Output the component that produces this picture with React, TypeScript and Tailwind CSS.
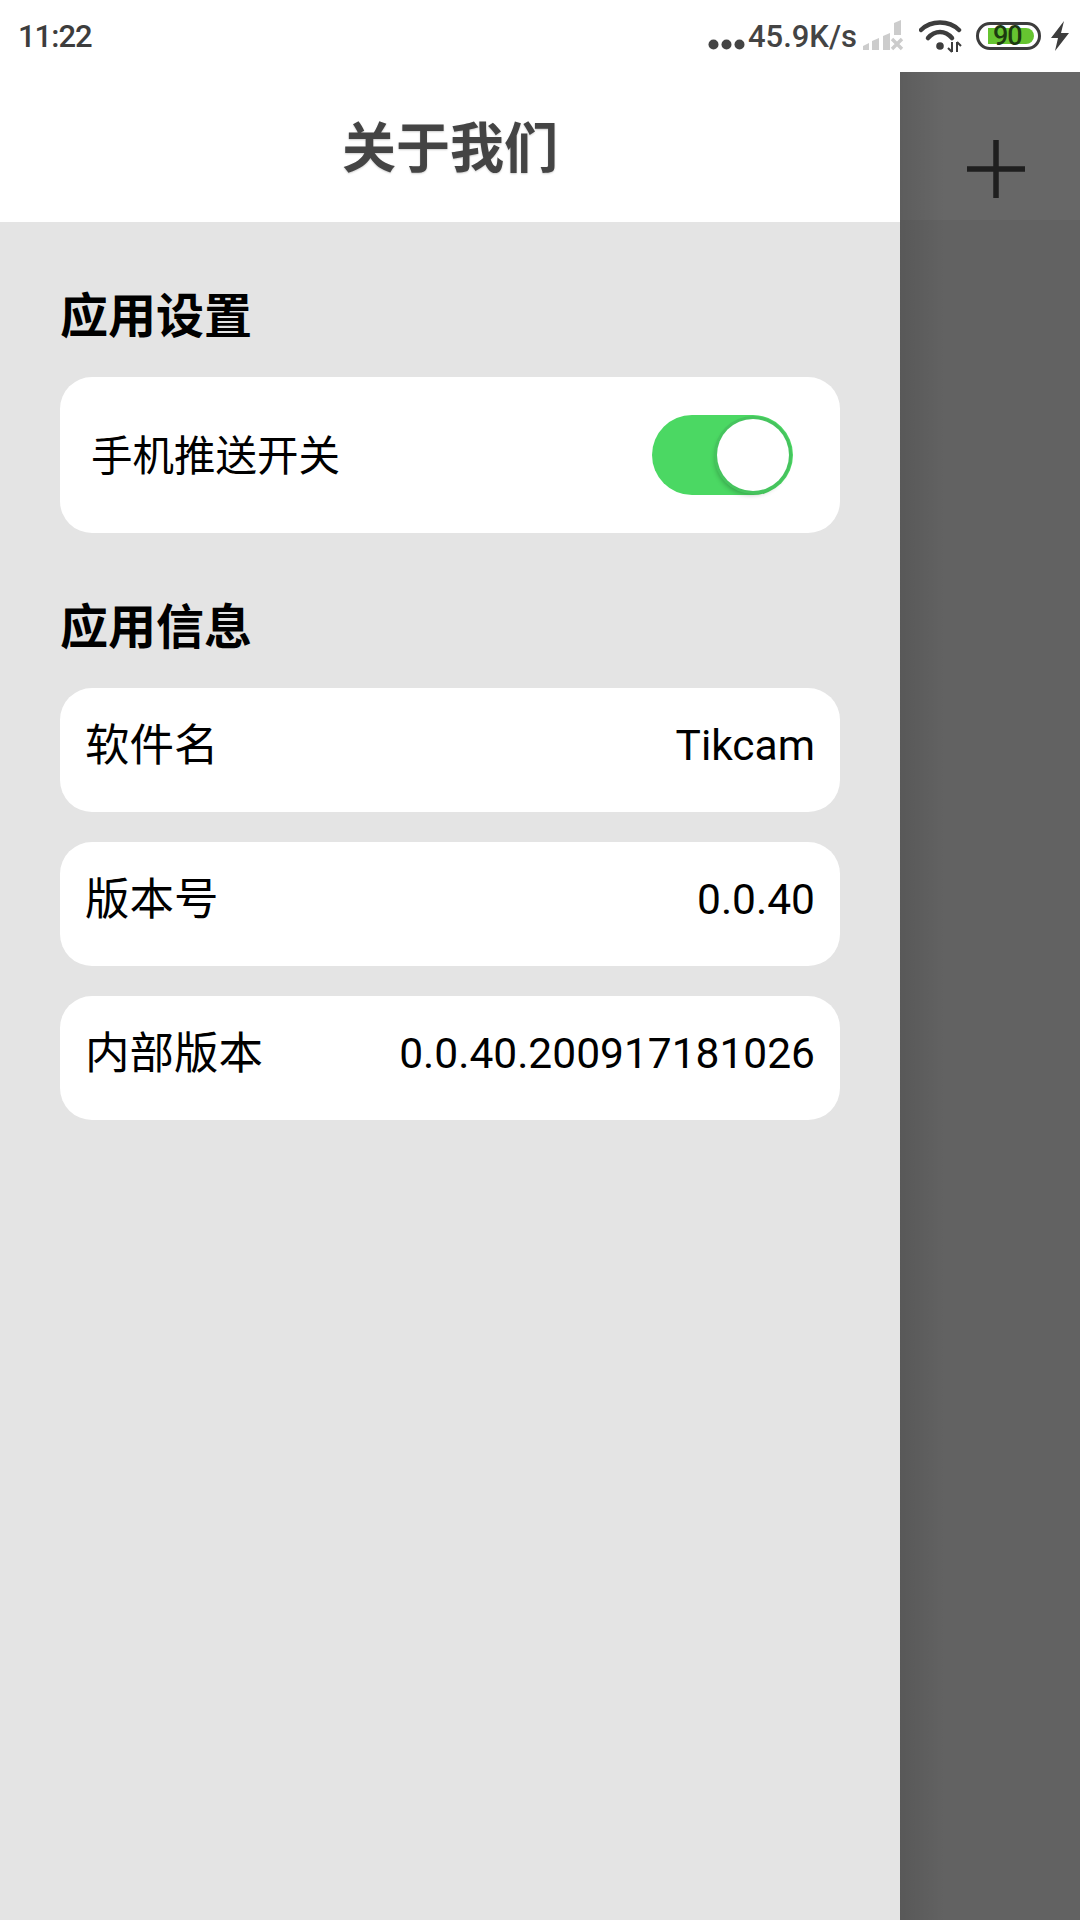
export default function App() {
  const infoRows = [
    { label: "软件名", value: "Tikcam" },
    { label: "版本号", value: "0.0.40" },
    { label: "内部版本", value: "0.0.40.200917181026" },
  ];

  return (
    <div className="w-[1080px] h-[1920px] flex flex-col overflow-hidden bg-white text-black font-['Roboto','Noto_Sans_CJK_SC',sans-serif]">
      {/* status bar */}
      <div className="h-[72px] shrink-0 flex items-center bg-white text-[#3d3d3d]">
        <span className="ml-[18px] text-[31px] font-medium leading-none tracking-[-1px]">11:22</span>
        <div className="ml-auto flex items-center">
          <svg width="37" height="13" viewBox="0 0 37 13" className="mt-[16px]">
            <circle cx="5.5" cy="6.5" r="5" fill="#444" />
            <circle cx="18.5" cy="6.5" r="5" fill="#444" />
            <circle cx="31.5" cy="6.5" r="5" fill="#444" />
          </svg>
          <span className="ml-[3px] text-[31px] font-medium leading-none text-[#444]">45.9K/s</span>
          <svg width="42" height="32" viewBox="0 0 42 32" className="ml-[6px]">
            <path d="M0 30v-4l6-3v7z" fill="#ccc" />
            <path d="M9 30V21l7-3v12z" fill="#ccc" />
            <path d="M20 30V16l7-3v17z" fill="#ccc" />
            <path d="M31 15V3l7-3v15z" fill="#ccc" />
            <path d="M29 19l10 10M39 19l-10 10" stroke="#ccc" strokeWidth="3.4" />
          </svg>
          <svg width="44" height="34" viewBox="0 0 44 34" className="ml-[14px]">
            <path d="M2 11C12 1 30 1 40 11" fill="none" stroke="#3d3d3d" strokeWidth="4.5" strokeLinecap="round" />
            <path d="M9 19C16 11 26 11 33 19" fill="none" stroke="#3d3d3d" strokeWidth="4.5" strokeLinecap="round" />
            <circle cx="21" cy="27" r="3.8" fill="#3d3d3d" />
            <path d="M33 23v10M29 29l4 4M38 33V23M38 23l4 4" fill="none" stroke="#3d3d3d" strokeWidth="2" />
          </svg>
          <div className="ml-[13px] w-[65px] h-[28px] rounded-full border-[3px] border-[#3d3d3d] p-[3px]">
            <div className="h-full w-[46px] ml-[6px] rounded-r-full bg-[#66c430] flex items-center justify-start pl-[5px] text-[27px] font-medium leading-none tracking-[-1px] text-[#1c3a10]">
              90
            </div>
          </div>
          <svg width="20" height="30" viewBox="0 0 20 30" className="ml-[9px] mr-[10px]">
            <path d="M14 0L1 17h7l-3 13L19 12h-8z" fill="#3d3d3d" />
          </svg>
        </div>
      </div>

      <div className="flex-1 flex min-h-0">
        {/* settings drawer */}
        <div className="w-[900px] flex flex-col bg-[#e4e4e4]">
          <div className="h-[150px] shrink-0 flex items-center justify-center bg-white">
            <span className="mt-[6px] text-[54px] font-bold leading-none text-[#444] [text-shadow:0_1px_2px_rgba(0,0,0,0.2)]">
              关于我们
            </span>
          </div>
          <div className="px-[60px]">
            <h2 className="mt-[67px] h-[56px] text-[48px] font-bold leading-[56px]">应用设置</h2>
            <div className="mt-[32px] h-[156px] flex items-center justify-between rounded-[32px] bg-white pl-[31px] pr-[47px]">
              <span className="mt-[3px] text-[41.5px] leading-none">手机推送开关</span>
              <div className="relative w-[141px] h-[80px] rounded-full bg-[#4bd863]">
                <div className="absolute right-[4px] top-[4px] w-[72px] h-[72px] rounded-full bg-white ring-[3px] ring-[#46c45e] shadow-[-2px_4px_5px_rgba(0,0,0,0.25)]" />
              </div>
            </div>
            <h2 className="mt-[67px] h-[56px] text-[48px] font-bold leading-[56px]">应用信息</h2>
            <div className="mt-[32px] flex flex-col gap-[30px]">
              {infoRows.map((row) => (
                <div key={row.label} className="h-[124px] flex items-center justify-between rounded-[32px] bg-white px-[25px] pb-[7px] text-[44.5px] leading-none">
                  <span>{row.label}</span>
                  <span className="text-[42.5px]">{row.value}</span>
                </div>
              ))}
            </div>
          </div>
        </div>

        {/* dimmed page behind the drawer */}
        <div className="relative w-[180px] flex flex-col bg-[#626262]">
          <div className="h-[148px] shrink-0 flex items-center justify-center bg-[#676767]">
            <svg width="60" height="60" viewBox="0 0 60 60" className="mt-[46px] ml-[12px]">
              <path d="M30 1v58M1 30h58" stroke="#1f1f1f" strokeWidth="5.5" />
            </svg>
          </div>
          <div className="absolute inset-y-0 left-0 w-[45px] bg-gradient-to-r from-black/10 to-transparent" />
        </div>
      </div>
    </div>
  );
}
